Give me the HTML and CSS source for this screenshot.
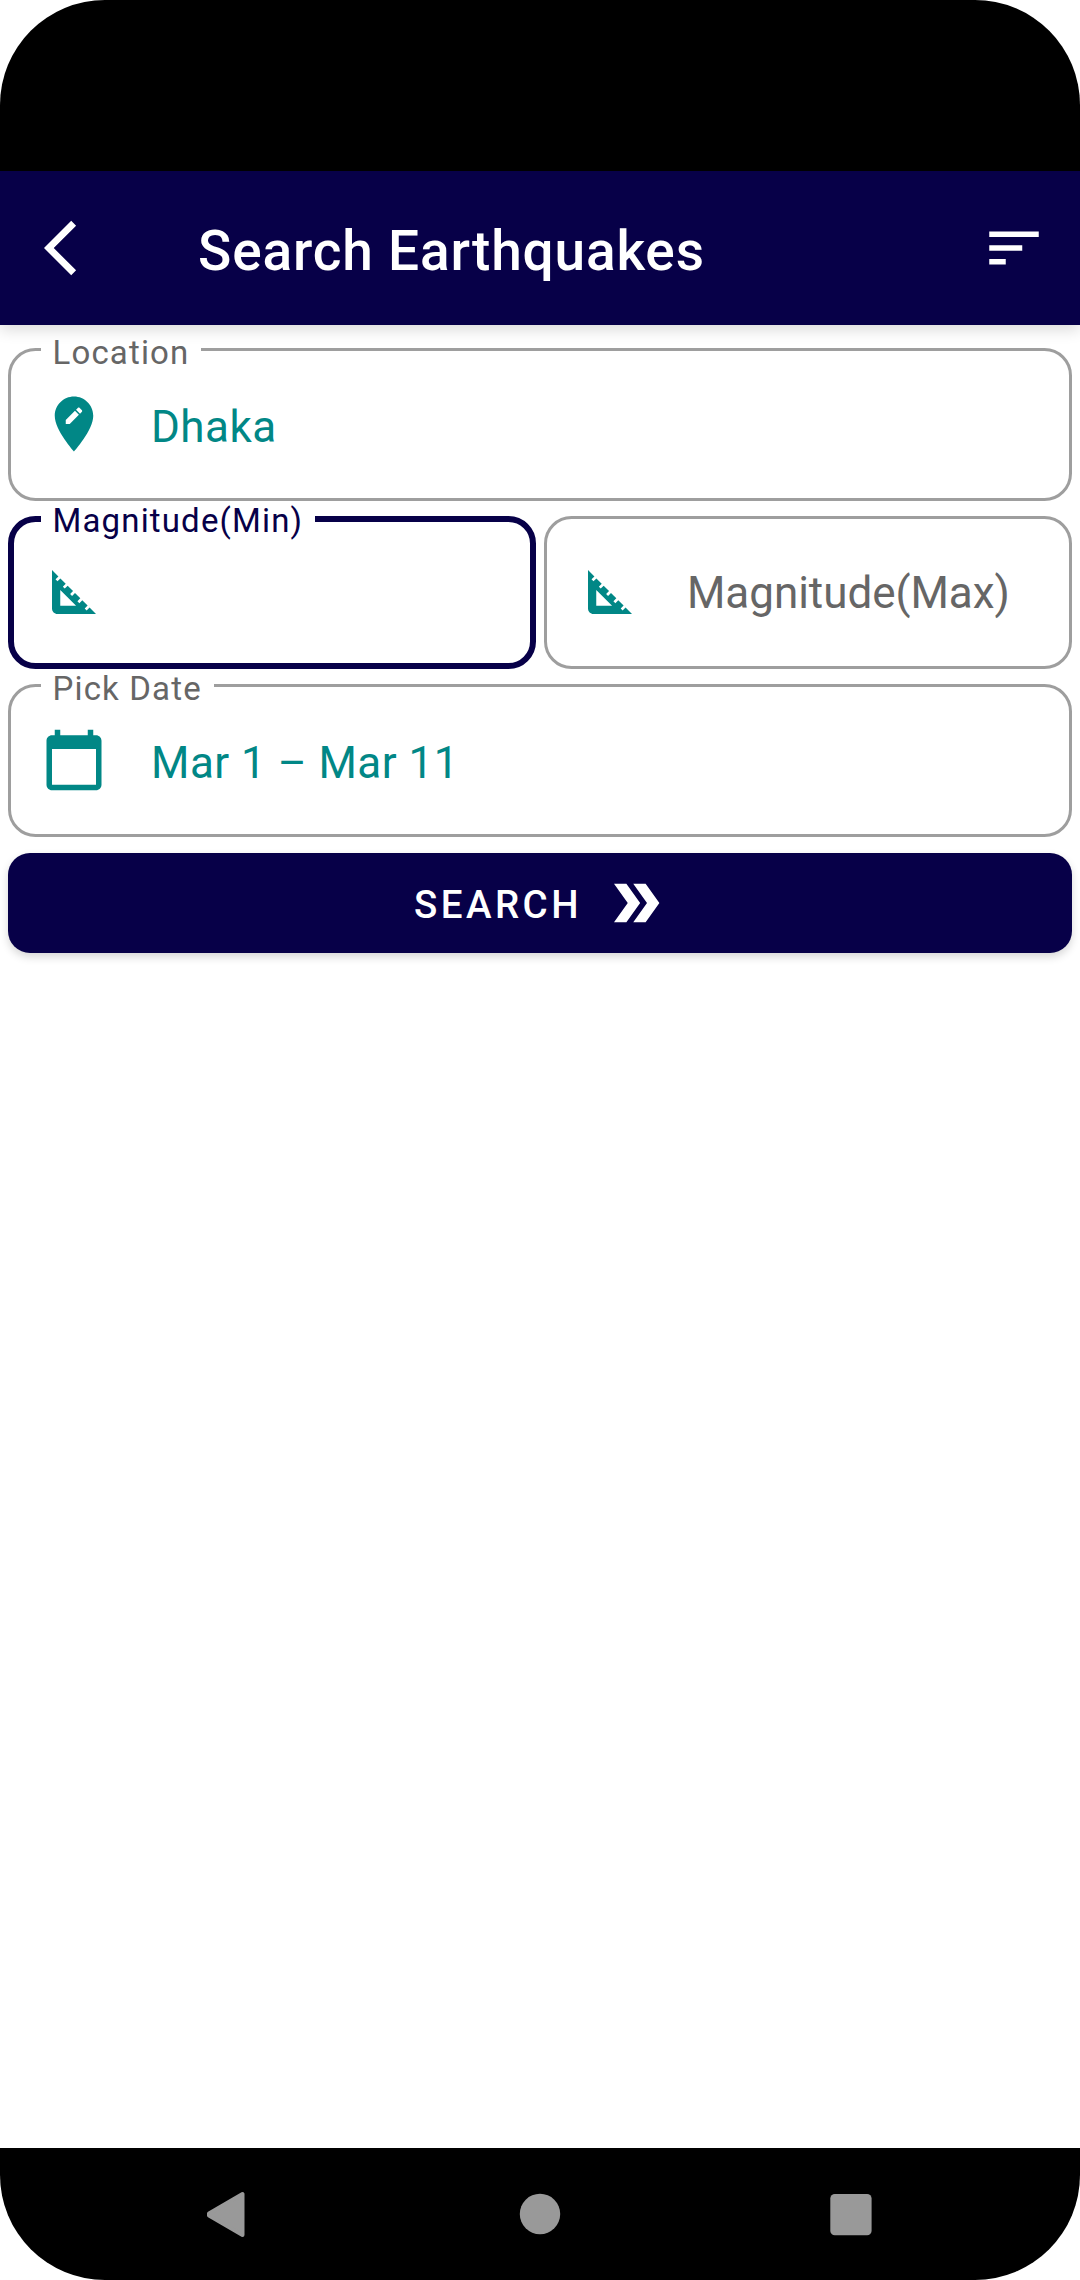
FILE: index.html
```html
<!DOCTYPE html>
<html lang="en">
<head>
<meta charset="utf-8">
<title>Search Earthquakes</title>
<link rel="stylesheet" href="styles.css">
</head>
<body>
<div class="device">
  <div class="status-bar"></div>
  <header class="app-bar">
    <svg class="icon" viewBox="0 0 24 24"><path d="M11.67 3.87 9.9 2.1 0 12l9.9 9.9 1.77-1.77L3.54 12z"/></svg>
    <h1 class="title">Search Earthquakes</h1>
    <svg class="icon" viewBox="0 0 24 24"><path d="M3 18h6v-2H3v2zM3 6v2h18V6H3zm0 7h12v-2H3v2z"/></svg>
  </header>
  <main class="form">
    <div class="field">
      <span class="label">Location</span>
      <svg class="icon" viewBox="0 0 24 24"><path d="M12 2C8.14 2 5 5.14 5 9c0 5.25 7 13 7 13s7-7.75 7-13c0-3.86-3.14-7-7-7zM10.44 12H9v-1.44l3.35-3.34 1.43 1.43L10.44 12zM14.89 7.55l-.7.7-1.44-1.44.7-.7c.15-.15.39-.15.54 0l.9.9c.15.15.15.39 0 .54z"/></svg>
      <span class="value">Dhaka</span>
    </div>
    <div class="row">
      <div class="field focused">
        <span class="label">Magnitude(Min)</span>
        <svg class="icon" viewBox="0 0 24 24"><path d="M17.66 17.66l-1.06 1.06-.71-.71 1.06-1.06-1.94-1.94-1.06 1.06-.71-.71 1.06-1.06-1.94-1.94-1.06 1.06-.71-.71 1.06-1.06L9.7 9.7l-1.06 1.06-.71-.71 1.06-1.06-1.94-1.94-1.06 1.06-.71-.71 1.06-1.06L4 4v14c0 1.1.9 2 2 2h14zM7 17v-5.76L12.76 17z"/></svg>
      </div>
      <div class="field">
        <svg class="icon" viewBox="0 0 24 24"><path d="M17.66 17.66l-1.06 1.06-.71-.71 1.06-1.06-1.94-1.94-1.06 1.06-.71-.71 1.06-1.06-1.94-1.94-1.06 1.06-.71-.71 1.06-1.06L9.7 9.7l-1.06 1.06-.71-.71 1.06-1.06-1.94-1.94-1.06 1.06-.71-.71 1.06-1.06L4 4v14c0 1.1.9 2 2 2h14zM7 17v-5.76L12.76 17z"/></svg>
        <span class="hint">Magnitude(Max)</span>
      </div>
    </div>
    <div class="field">
      <span class="label">Pick Date</span>
      <svg class="icon" viewBox="0 0 24 24"><path d="M20 3h-1V1h-2v2H7V1H5v2H4c-1.1 0-2 .9-2 2v16c0 1.1.9 2 2 2h16c1.1 0 2-.9 2-2V5c0-1.1-.9-2-2-2zm0 18H4V8h16v13z"/></svg>
      <span class="value">Mar 1 – Mar 11</span>
    </div>
    <button class="search" type="button">
      <span class="search-text">SEARCH</span>
      <svg class="icon" viewBox="0 0 24 24"><path d="M15.5 5H11l5 7-5 7h4.5l5-7zM8.5 5H4l5 7-5 7h4.5l5-7z"/></svg>
    </button>
  </main>
  <nav class="nav-bar">
    <svg class="nav-icon" viewBox="0 0 66 66"><path d="M13 32.5 46.5 13v41L13 34.5z" stroke="#999" stroke-width="4" stroke-linejoin="round"/></svg>
    <svg class="nav-icon" viewBox="0 0 66 66"><circle cx="33" cy="33" r="20.2"/></svg>
    <svg class="nav-icon" viewBox="0 0 66 66"><rect x="12.3" y="13" width="41.3" height="41.3" rx="4.5"/></svg>
  </nav>
</div>
</body>
</html>
```

FILE: styles.css
```css
* {
  box-sizing: border-box;
}

body {
  margin: 0;
  background: #fff;
  font-family: Roboto, sans-serif;
}

.device {
  display: flex;
  flex-direction: column;
  width: 1080px;
  height: 2280px;
  overflow: hidden;
  border-radius: 105px;
  background: #fff;
}

.icon {
  flex: none;
  width: 66px;
  height: 66px;
  fill: currentColor;
}

.status-bar {
  height: 171px;
  background: #000;
}

.app-bar {
  display: flex;
  align-items: center;
  height: 154px;
  padding: 0 33px 0 44px;
  background: #070048;
  color: #fff;
  box-shadow: 0 5px 14px rgba(0, 0, 0, 0.14);
}

.title {
  flex: 1;
  margin: 0;
  padding: 6px 0 0 88px;
  font-size: 55px;
  font-weight: 500;
  line-height: 64px;
  letter-spacing: 0.015em;
}

.form {
  display: flex;
  flex: 1;
  flex-direction: column;
  gap: 15px;
  padding: 23px 8px 0;
}

.row {
  display: grid;
  grid-template-columns: 1fr 1fr;
  gap: 8px;
}

.field {
  --stroke: 3px;
  position: relative;
  display: flex;
  align-items: center;
  gap: 44px;
  height: 153px;
  padding-left: calc(33px - var(--stroke));
  border: var(--stroke) solid #9e9e9e;
  border-radius: 27.5px;
  color: #018786;
  font-size: 44px;
  line-height: 52px;
}

.field .icon {
  margin-bottom: 1px;
}

.focused {
  --stroke: 6px;
  border-color: #070048;
}

/* The label's background only interrupts the outline behind it. */
.label {
  position: absolute;
  top: calc(-15px - var(--stroke));
  left: calc(33px - var(--stroke));
  padding: 0 12px 0 11.5px;
  background: linear-gradient(#fff, #fff) 0 15px / 100% 6px no-repeat;
  color: #666;
  font-size: 33px;
  line-height: 40px;
  letter-spacing: 0.035em;
  white-space: nowrap;
}

.focused .label {
  color: #070048;
}

.value {
  padding-top: 5px;
  letter-spacing: 0.011em;
}

.hint {
  color: #666;
  letter-spacing: -0.001em;
}

.search {
  display: flex;
  align-items: center;
  justify-content: center;
  gap: 21px;
  height: 100px;
  margin-top: 1px;
  padding: 0 0 0 3px;
  border: 0;
  border-radius: 22px;
  background: #070048;
  color: #fff;
  font: 500 38.5px/46px Roboto, sans-serif;
  letter-spacing: 0.0893em;
  box-shadow: 0 4px 8px rgba(0, 0, 0, 0.16);
}

.search-text {
  padding-top: 3px;
}

.nav-bar {
  display: flex;
  align-items: center;
  justify-content: center;
  gap: 245px;
  height: 132px;
  background: #000;
}

.nav-icon {
  width: 66px;
  height: 66px;
  fill: #999;
}
```
